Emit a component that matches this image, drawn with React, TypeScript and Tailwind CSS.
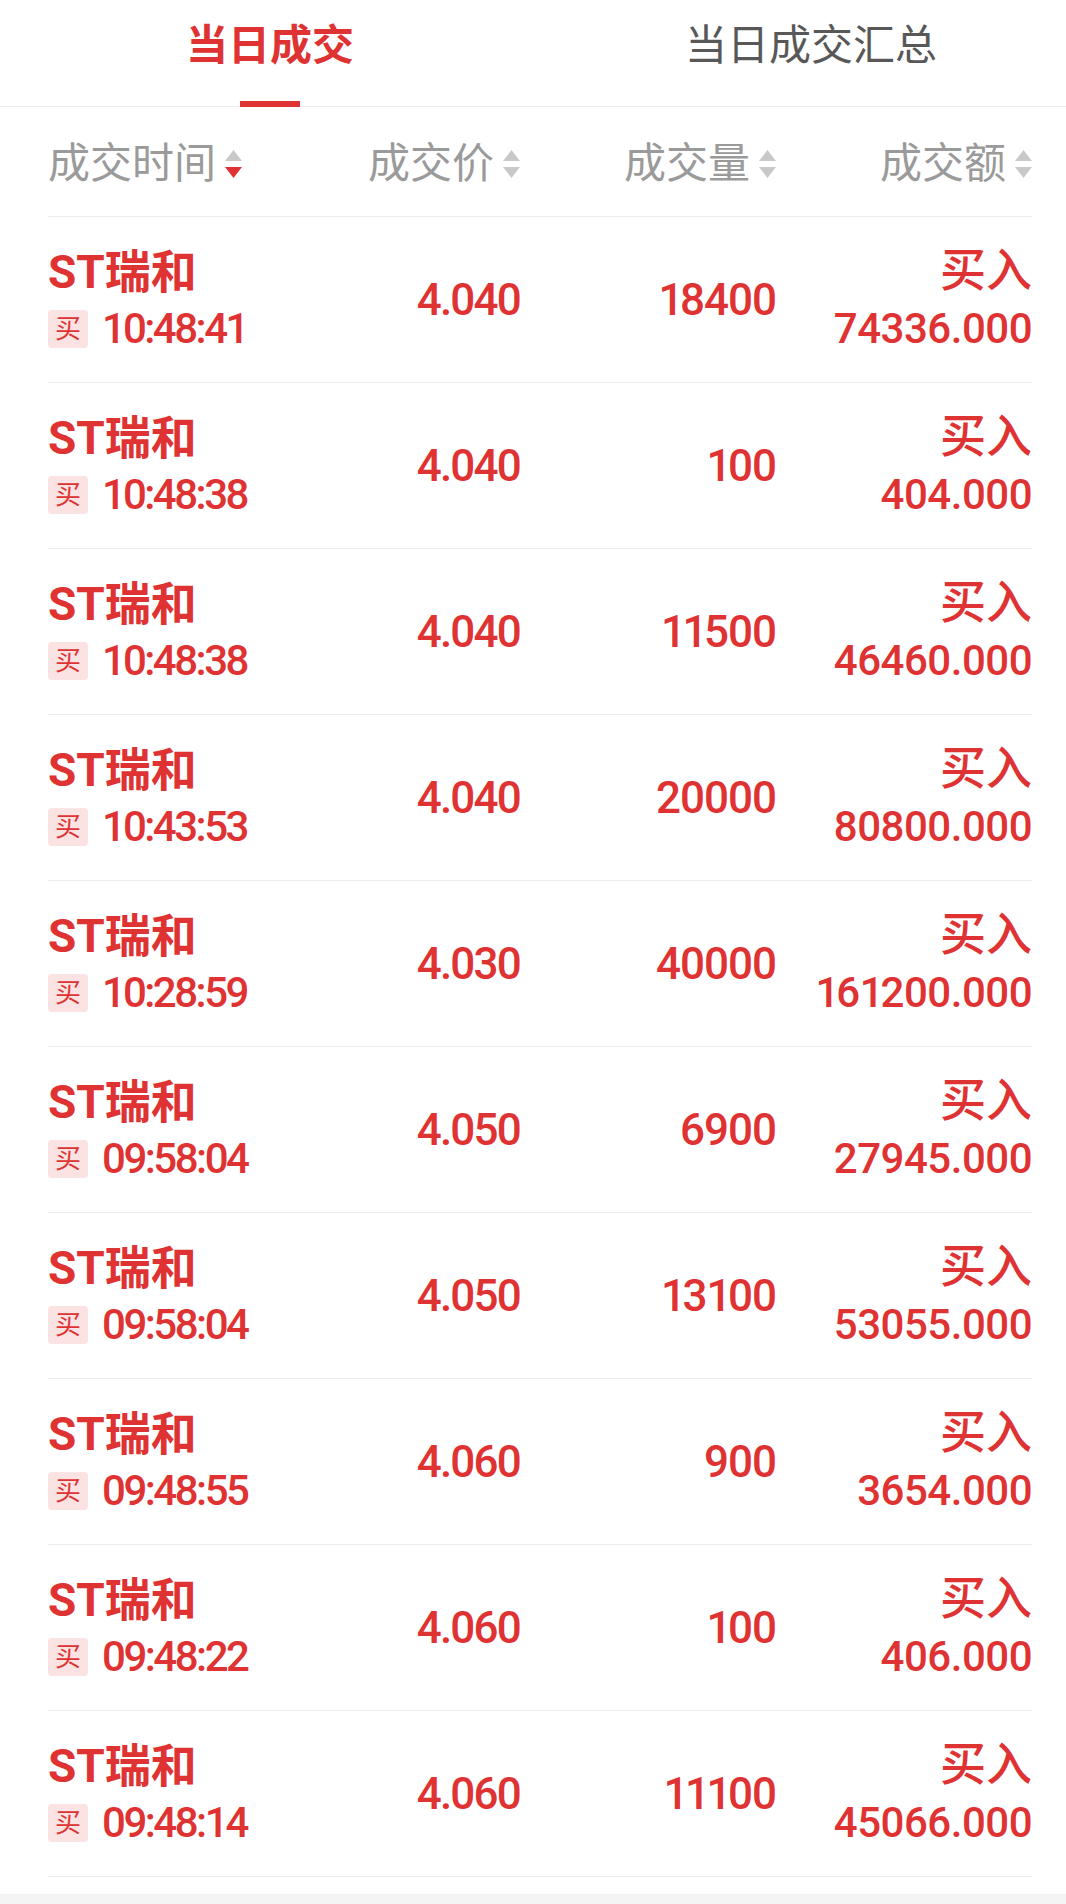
import React from "react";

const rows = [
  { time: "10:48:41", price: "4.040", vol: "18400", amt: "74336.000" },
  { time: "10:48:38", price: "4.040", vol: "100", amt: "404.000" },
  { time: "10:48:38", price: "4.040", vol: "11500", amt: "46460.000" },
  { time: "10:43:53", price: "4.040", vol: "20000", amt: "80800.000" },
  { time: "10:28:59", price: "4.030", vol: "40000", amt: "161200.000" },
  { time: "09:58:04", price: "4.050", vol: "6900", amt: "27945.000" },
  { time: "09:58:04", price: "4.050", vol: "13100", amt: "53055.000" },
  { time: "09:48:55", price: "4.060", vol: "900", amt: "3654.000" },
  { time: "09:48:22", price: "4.060", vol: "100", amt: "406.000" },
  { time: "09:48:14", price: "4.060", vol: "11100", amt: "45066.000" },
];

const CJK = "font-['Roboto','Noto_Sans_CJK_SC',sans-serif]";

function Num({ v, oneCls = "mr-[-2.5px]" }: { v: string; oneCls?: string }) {
  return (
    <>
      {v.split("").map((c, i) =>
        c === "1" ? (
          <span key={i} className={oneCls}>
            1
          </span>
        ) : (
          <React.Fragment key={i}>{c}</React.Fragment>
        )
      )}
    </>
  );
}

function SortIcon({ active }: { active?: boolean }) {
  return (
    <svg width="17" height="28" viewBox="0 0 17 28" className="shrink-0">
      <polygon points="8.5,0 17,11 0,11" fill="#c9c9c9" />
      <polygon points="0,17 17,17 8.5,28" fill={active ? "#df3232" : "#c9c9c9"} />
    </svg>
  );
}

function HeadCell({ label, active, align }: { label: string; active?: boolean; align: "left" | "right" }) {
  return (
    <div className={`flex items-center gap-[9px] ${align === "right" ? "justify-end" : "justify-start"}`}>
      <span className="text-[42px] leading-[56px] text-[#9a9a9a]">{label}</span>
      <SortIcon active={active} />
    </div>
  );
}

export default function App() {
  return (
    <div className={`w-[1066px] h-[1904px] bg-[#f4f4f4] ${CJK}`}>
      <div className="bg-white pb-[17px]">
        {/* Tabs */}
        <div className="flex h-[107px] border-b border-[#ececec]">
          <div className="relative w-[540px] flex justify-center pt-[17px]">
            <span className="text-[42px] leading-[58px] font-bold text-[#df3232]">当日成交</span>
            <div className="absolute bottom-[-1px] left-[240px] w-[60px] h-[6px] bg-[#df3232]" />
          </div>
          <div className="flex-1 flex justify-center pt-[17px] pl-[16px]">
            <span className="text-[42px] leading-[58px] text-[#585858]">当日成交汇总</span>
          </div>
        </div>

        <div className="ml-[48px] mr-[34px]">
          {/* Header */}
          <div className="grid grid-cols-[242px_230px_256px_256px] h-[110px] items-center border-b border-[#ececec] pt-[4px]">
            <HeadCell label="成交时间" active align="left" />
            <HeadCell label="成交价" align="right" />
            <HeadCell label="成交量" align="right" />
            <HeadCell label="成交额" align="right" />
          </div>

          {rows.map((r, i) => (
            <div
              key={i}
              className="grid grid-cols-[242px_230px_256px_256px] h-[166px] items-center border-b border-[#ececec] text-[#df3232]"
            >
              <div className="flex flex-col">
                <div className="text-[46px] leading-[56px] font-bold">ST瑞和</div>
                <div className="flex items-center h-[56px] pt-[3px]">
                  <div className="w-[40px] h-[38px] rounded-[4px] bg-[#fce3e3] flex items-center justify-center text-[26px] leading-none">
                    买
                  </div>
                  <span className="ml-[14px] text-[42px] leading-[56px] font-medium tracking-[-2.5px]">
                    <Num v={r.time} oneCls="mr-[-0.5px]" />
                  </span>
                </div>
              </div>
              <div className="text-right text-[44px] leading-[56px] font-medium tracking-[-1.8px]">
                <Num v={r.price} />
              </div>
              <div className="text-right text-[44px] leading-[56px] font-medium tracking-[-1px]">
                <Num v={r.vol} />
              </div>
              <div className="flex flex-col items-end">
                <div className="text-[46px] leading-[56px] font-medium">买入</div>
                <div className="text-[42px] leading-[56px] font-medium tracking-[-0.5px] pt-[3px]">
                  <Num v={r.amt} />
                </div>
              </div>
            </div>
          ))}
        </div>
      </div>
    </div>
  );
}
